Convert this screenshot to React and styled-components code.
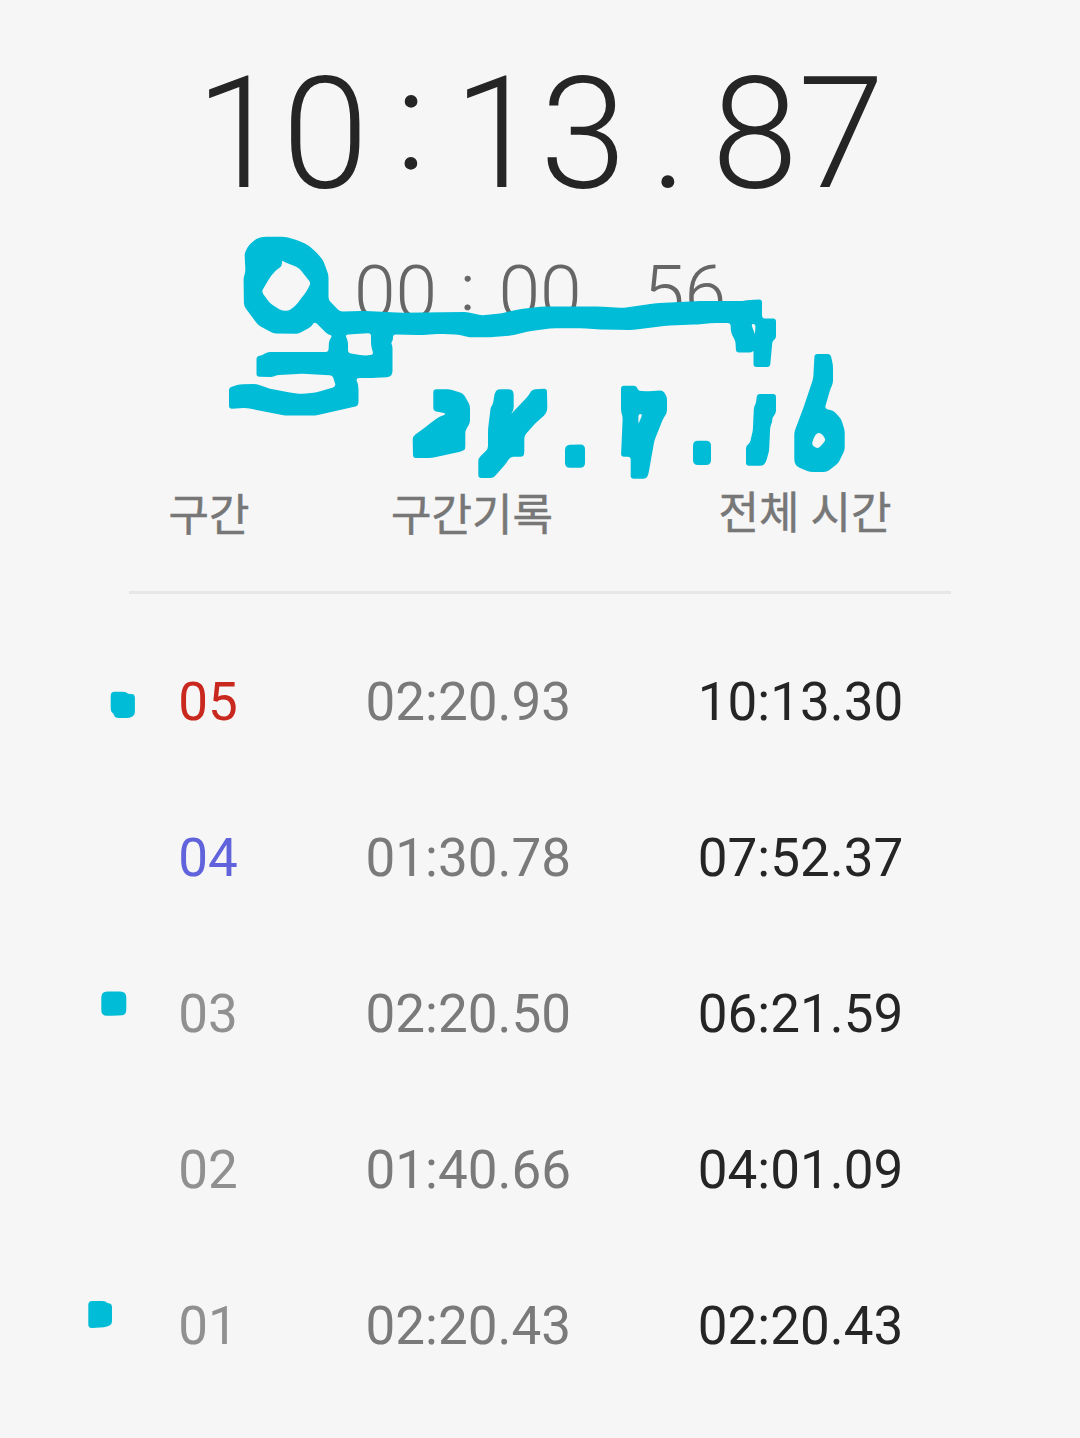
import React from 'react'
import styled, { createGlobalStyle } from 'styled-components'

const GlobalStyle = createGlobalStyle`
  * {
    box-sizing: border-box;
  }

  body {
    margin: 0;
    background: #f6f6f6;
    font-family: Roboto, 'Noto Sans CJK KR', sans-serif;
  }
`

const Page = styled.main`
  position: relative;
  width: 1080px;
  height: 1438px;
  padding-top: 42px;
  overflow: hidden;
  background: #f6f6f6;
`

const Clock = styled.div`
  display: flex;
  justify-content: center;
  align-items: flex-end;
  height: ${({ $height }) => $height}px;
  margin-top: ${({ $top }) => $top || 0}px;
  font-size: ${({ $size }) => $size}px;
  line-height: ${({ $height }) => $height}px;
  font-weight: 300;
  color: ${({ $color }) => $color};
`

const Digits = styled.span`
  display: flex;
  justify-content: center;
  width: ${({ $width }) => $width}px;
`

const Separator = styled.span`
  width: ${({ $width }) => $width}px;
  text-align: center;
`

// The colon is tighter than the font's own and sits above the baseline
const Colon = styled(Separator)`
  padding-bottom: ${({ $lift }) => $lift}px;
  font-size: 0.875em;
  -webkit-text-stroke: 0.01em currentColor;
`

const TableHead = styled.div`
  display: grid;
  grid-template-columns: 160px 366px 300px;
  width: 822px;
  height: 122px;
  margin: 136px auto 0;
  padding-top: 14px;
  border-bottom: 3px solid #e6e6e6;
  color: #777;
  font-size: 44px;
  line-height: 60px;
  text-align: center;
  -webkit-text-stroke: 0.5px currentColor;
`

const HeadCell = styled.span`
  margin-top: ${({ $raise }) => -($raise || 0)}px;
`

const LapList = styled.div`
  width: 822px;
  margin: 30px auto 0;
`

const LapRow = styled.div`
  display: grid;
  grid-template-columns: 158px 362.5px 302px;
  align-items: center;
  height: 156px;
  font-size: 53px;
  text-align: center;
`

const LapIndex = styled.span`
  color: ${({ $color }) => $color};
`

const LapTime = styled.span`
  color: #7a7a7a;
`

const TotalTime = styled.span`
  color: #252525;
`

const Ink = styled.svg`
  position: absolute;
  top: 0;
  left: 0;
  fill: #00bcd7;
  fill-rule: evenodd;
  pointer-events: none;
`

const laps = [
  { index: '05', lap: '02:20.93', total: '10:13.30', color: '#c9281f' },
  { index: '04', lap: '01:30.78', total: '07:52.37', color: '#6063dc' },
  { index: '03', lap: '02:20.50', total: '06:21.59', color: '#909090' },
  { index: '02', lap: '01:40.66', total: '04:01.09', color: '#909090' },
  { index: '01', lap: '02:20.43', total: '02:20.43', color: '#909090' },
]

// Each marker shape is a list of closed outlines, later ones cut holes
const inkShapes = [
  {
    round: 3,
    outlines: [
      '244.5,253 249,245 256,239 263,236.7 285,236.7 297,240 308,245 316,252 323,260 328.5,275 328.5,300 340,311.5 363,311 400,312.7 467,312 482,315.5 503,313 520,309 543,306.5 600,306.5 623,308 657,303 703,301 743,301 747,300 762,299.5 762,318.5 776,318.5 776,339 772.5,340.5 770,367 753.5,367 753.5,350 752,352.5 736,352.5 735.5,341.5 731,332.5 730.5,323 713,323 697,324.5 667,325.5 633,330 600,329.5 583,328.3 553,328.3 530,331 512,335.5 490,337.3 470,337.3 458,334.7 440,334 420,335 393,334.5 393,340 391,343 392.5,346 392.5,373.5 390,377 373,378 356,378 358.5,386.5 358.5,404.5 356,406.5 315,415.5 285,415.5 246.5,408 229,408.8 229,387.5 240,384.3 256.5,384 270,388.7 290,392.5 300,394 316.5,392.5 336,386.5 332.5,375.3 300,373.7 276.5,375.3 273.5,377 256.5,376.7 256.5,356.5 263,355 267,352 328.5,352 329,340 332.5,335.7 328,334.5 314.5,321.5 311.5,326.5 298,333.8 273,333.3 258,325 244,306 243.5,278 245.5,271.5',
      '282,260 284,262 298.5,267.5 311,283 306,292 300,300 295,306.5 288,311 281.5,310.5 270,303.5 261.5,291.5 270,277.5 275,271 282,266',
      '345,334.5 352,334.3 371,333 371,345 373.5,355 363,355.5 348,353 348,341',
      '751,324 755.5,324 755,335 753.5,330',
    ],
  },
  {
    round: 3,
    outlines: [
      '433.3,389.3 450,389.3 463,393.5 470,405 470,423 465.3,430.7 465.3,449.3 463,451 432,458 413,458 412.7,436.5 427,426 437,418 446.7,413.7 433.3,410.7',
    ],
  },
  {
    round: 3,
    outlines: [
      '497,389.3 511.7,389.3 513.7,392.7 513.7,410 510.3,415 528.3,395.7 532.3,389.3 547,388.7 547.3,410.7 544,416 536.7,421.7 524.3,435.7 524.3,454 522.7,456.7 510.3,456.7 506.7,462.7 493.3,478 478.3,478 478.3,458.3 488,449 488,430 490.7,406.7 492.7,405 494.7,393.3',
    ],
  },
  { round: 5, outlines: ['565,445 585,444.3 585,467.7 565,467.7'] },
  {
    round: 3,
    outlines: [
      '621,385.7 636.5,385.7 638.3,391 650,391.3 662.7,390.3 667,396.7 667,412.7 663.3,418.3 654.3,440.7 648.3,475 646,478.7 630.7,478.7 630.7,456.7 621,456.7 622.7,416.7 621,411.7',
      '638.5,414 642.5,414 638.3,424.5',
    ],
  },
  { round: 5, outlines: ['693,440.7 711,440.7 711,465 693,465'] },
  {
    round: 3,
    outlines: [
      '757,394 776,394 776,413.5 772.3,417.3 772.3,421.7 770.3,426 769,451.7 765.7,462.7 762.7,465.7 746,465.7 746,445.7 749.7,443.3 752.7,431.7 754,406.7 756,403.3',
    ],
  },
  {
    round: 3,
    outlines: [
      '814.5,354 830.5,354 833,365 833,383.3 830,390 824.7,408.7 833.3,410.7 840.7,418.3 844.7,430 844.7,450 838.3,463.3 826.7,472 810,472 796.7,466.7 794.3,461.7 794.3,431.7 803.3,408.3 813.3,378.3',
      '816.7,433 821.3,433 826,440 818.3,448.7 812.7,446 812,442.7 814.3,436.7',
    ],
  },
  {
    round: 4,
    outlines: ['110.7,691.7 126,691.7 128,694 134.9,693.8 134.9,715 130,718 115,718 113.5,713.5 110.7,711.5'],
  },
  { round: 6, outlines: ['101.3,991.5 126.3,991.5 126.3,1015 118,1015.5 101.3,1016'] },
  {
    round: 4,
    outlines: ['88.3,1301 105.5,1301 107,1303.3 112,1303.7 112,1325 104,1327.3 88.3,1328.3'],
  },
]

// Closed path with softened corners
const softPath = (outline, round) => {
  const points = outline.split(' ').map((pair) => pair.split(',').map(Number))

  const towards = ([x1, y1], [x2, y2]) => {
    const length = Math.hypot(x2 - x1, y2 - y1)
    const step = Math.min(round, length / 2) / length
    return `${(x1 + (x2 - x1) * step).toFixed(1)} ${(y1 + (y2 - y1) * step).toFixed(1)}`
  }

  return points
    .map((point, i) => {
      const previous = points[(i + points.length - 1) % points.length]
      const next = points[(i + 1) % points.length]
      return `${i ? 'L' : 'M'}${towards(point, previous)} Q${point.join(' ')} ${towards(point, next)}`
    })
    .join(' ') + 'Z'
}

const MarkerInk = () => (
  <Ink width='1080' height='1438' viewBox='0 0 1080 1438' aria-hidden='true'>
    {inkShapes.map(({ outlines, round }, index) => (
      <path key={index} d={outlines.map((outline) => softPath(outline, round)).join(' ')} />
    ))}
  </Ink>
)

const App = () => {
  return (
    <>
      <GlobalStyle />
      <Page>
        <Clock $size={156} $height={183} $color='#252525'>
          <Digits $width={175}>10</Digits>
          <Colon $width={83} $lift={12}>:</Colon>
          <Digits $width={175}>13</Digits>
          <Separator $width={83}>.</Separator>
          <Digits $width={175}>87</Digits>
        </Clock>

        <Clock $size={75} $height={88} $top={23} $color='#666'>
          <Digits $width={84}>00</Digits>
          <Colon $width={60.5} $lift={4}>:</Colon>
          <Digits $width={84}>00</Digits>
          <Separator $width={60.5}>.</Separator>
          <Digits $width={84}>56</Digits>
        </Clock>

        <TableHead>
          <HeadCell>구간</HeadCell>
          <HeadCell>구간기록</HeadCell>
          <HeadCell $raise={2}>전체 시간</HeadCell>
        </TableHead>

        <LapList>
          {laps.map(({ index, lap, total, color }) => (
            <LapRow key={index}>
              <LapIndex $color={color}>{index}</LapIndex>
              <LapTime>{lap}</LapTime>
              <TotalTime>{total}</TotalTime>
            </LapRow>
          ))}
        </LapList>

        <MarkerInk />
      </Page>
    </>
  )
}

export default App
